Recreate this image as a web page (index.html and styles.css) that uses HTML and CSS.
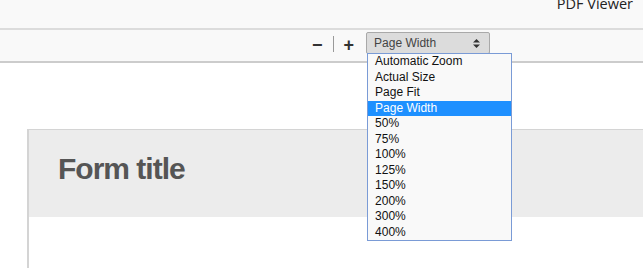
FILE: index.html
```html
<!DOCTYPE html>
<html lang="en">
<head>
    <meta charset="UTF-8">
    <meta name="viewport" content="width=device-width, initial-scale=1.0">
    <title>PDF Viewer</title>
    <link rel="stylesheet" href="styles.css">
</head>
<body>
    <div class="topbar">
        <span class="app-name">PDF Viewer</span>
    </div>

    <div class="toolbar">
        <button class="zoom-btn" type="button">&minus;</button>
        <span class="divider"></span>
        <button class="zoom-btn" type="button">+</button>

        <div class="zoom-select">
            <div class="select-box">
                <span>Page Width</span>
                <svg class="arrows" width="7" height="9" viewBox="0 0 7 9">
                    <path d="M3.5 0 L7 3.5 L0 3.5 Z M0 5.5 L7 5.5 L3.5 9 Z" fill="#333"/>
                </svg>
            </div>
            <ul class="options">
                <li>Automatic Zoom</li>
                <li>Actual Size</li>
                <li>Page Fit</li>
                <li class="selected">Page Width</li>
                <li>50%</li>
                <li>75%</li>
                <li>100%</li>
                <li>125%</li>
                <li>150%</li>
                <li>200%</li>
                <li>300%</li>
                <li>400%</li>
            </ul>
        </div>
    </div>

    <div class="viewer">
        <div class="page">
            <div class="form-header">
                <h1>Form title</h1>
            </div>
            <div class="form-body"></div>
        </div>
    </div>
</body>
</html>
```

FILE: styles.css
```css
body {
    margin: 0;
    font-family: "Liberation Sans", Arial, sans-serif;
    background-color: #fff;
    color: #333;
    overflow: hidden;
}
.topbar {
    height: 28px;
    background-color: #f9f9f9;
    border-bottom: 2px solid #dcdcdc;
    display: flex;
    justify-content: flex-end;
    align-items: flex-start;
    padding-right: 10px;
    overflow: hidden;
}
.app-name {
    font-family: "Open Sans", sans-serif;
    font-size: 14.5px;
    line-height: 14px;
    margin-top: -3px;
    color: #222;
}
.toolbar {
    height: 31px;
    background-color: #f9f9f9;
    border-bottom: 2px solid #ccc;
    display: flex;
    align-items: flex-start;
    padding-left: 312px;
}
.zoom-btn {
    background: none;
    border: none;
    padding: 0;
    margin-top: 6px;
    font-family: "Liberation Sans", Arial, sans-serif;
    font-size: 18px;
    font-weight: bold;
    line-height: 18px;
    color: #333;
    cursor: pointer;
}
.divider {
    width: 1px;
    height: 16px;
    margin: 6px 10px 0 10px;
    background-color: #999;
}
.zoom-select {
    position: relative;
    margin-left: 12px;
    margin-top: 2px;
}
.select-box {
    height: 20px;
    width: 113px;
    background-color: #dcdcdc;
    border: 1px solid #a9a9a9;
    border-radius: 2px;
    display: flex;
    align-items: center;
    justify-content: space-between;
    padding: 0 9px 0 0;
    font-size: 12px;
    color: #444;
}
.select-box span {
    padding-left: 7px;
}
.options {
    position: absolute;
    top: 21px;
    left: 1px;
    width: 143px;
    margin: 0;
    padding: 0;
    list-style: none;
    background-color: #f9f9f9;
    border: 1px solid #7a9bd6;
    z-index: 10;
}
.options li {
    height: 15.5px;
    line-height: 15.5px;
    padding-left: 7px;
    font-size: 12px;
    color: #111;
}
.options li.selected {
    background-color: #1e90ff;
    color: #fff;
}
.viewer {
    padding: 66px 0 0 27px;
}
.page {
    border-top: 1px solid #d4d4d4;
    border-left: 2px solid #d4d4d4;
}
.form-header {
    height: 87px;
    box-sizing: border-box;
    background-color: #ececec;
    padding: 0 0 9px 29px;
    display: flex;
    align-items: center;
}
.form-header h1 {
    margin: 0;
    font-size: 30px;
    letter-spacing: -1px;
    color: #555;
}
.form-body {
    height: 60px;
    background-color: #fff;
}
```
